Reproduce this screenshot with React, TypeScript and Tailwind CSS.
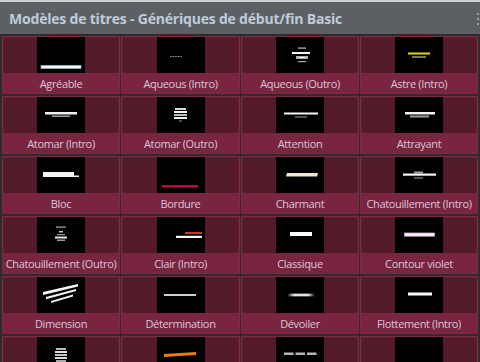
import type { ReactNode } from "react";

type Preset = { name: string; art: ReactNode };

const presets: Preset[] = [
  {
    name: "Agréable",
    art: <rect x="4" y="28.5" width="40" height="3" fill="#eef8fb" stroke="#9cc6d6" strokeWidth="0.6" />,
  },
  {
    name: "Aqueous (Intro)",
    art: <line x1="13" y1="19.5" x2="25" y2="19.5" stroke="#9a9a9a" strokeWidth="1" strokeDasharray="1 0.6" />,
  },
  {
    name: "Aqueous (Outro)",
    art: (
      <g>
        <rect x="22" y="10.5" width="8" height="1.2" fill="#bdbdbd" />
        <rect x="16" y="15" width="18" height="2" fill="#f4f4f4" />
        <rect x="20" y="19" width="12" height="3" fill="#b0b0b0" />
        <rect x="23" y="20" width="6" height="1" fill="#e8e8e8" />
        <rect x="22" y="24" width="8" height="1.2" fill="#a8a8a8" />
      </g>
    ),
  },
  {
    name: "Astre (Intro)",
    art: (
      <g>
        <rect x="13" y="15.5" width="22" height="2" fill="#e4d51a" />
        <rect x="17" y="19.5" width="14" height="1" fill="#e6e6e6" />
      </g>
    ),
  },
  {
    name: "Atomar (Intro)",
    art: (
      <g>
        <rect x="8" y="15" width="32" height="2.5" fill="#f2f2f2" />
        <rect x="15" y="18.5" width="18" height="1.5" fill="#9a9a9a" />
      </g>
    ),
  },
  {
    name: "Atomar (Outro)",
    art: (
      <g>
        <rect x="18" y="11" width="11" height="2" fill="#d8d8d8" />
        <rect x="17" y="14" width="13" height="2" fill="#f4f4f4" />
        <rect x="17" y="17" width="13" height="2" fill="#bdbdbd" />
        <rect x="17" y="20" width="13" height="2" fill="#f0f0f0" />
        <rect x="22" y="23.5" width="3" height="1" fill="#8a8a8a" />
      </g>
    ),
  },
  {
    name: "Attention",
    art: (
      <g>
        <rect x="8" y="15.5" width="34" height="2" fill="#f4f4f4" />
        <rect x="19" y="19.5" width="12" height="1" fill="#a8a8a8" />
      </g>
    ),
  },
  {
    name: "Attrayant",
    art: (
      <g>
        <rect x="10" y="15" width="30" height="2.5" fill="#f2f2f2" />
        <rect x="15" y="18.5" width="19" height="2" fill="#9c9c9c" />
      </g>
    ),
  },
  {
    name: "Bloc",
    art: (
      <g>
        <rect x="6" y="15" width="31" height="5" fill="#f4f4f4" />
        <rect x="37" y="18.5" width="5" height="1.5" fill="#f4f4f4" />
      </g>
    ),
  },
  {
    name: "Bordure",
    art: <rect x="5" y="28" width="36" height="2.6" fill="#a3124a" />,
  },
  {
    name: "Charmant",
    art: <polygon points="11,16 42,16 41,19.5 10,19.5" fill="#f1ead0" />,
  },
  {
    name: "Chatouillement (Intro)",
    art: (
      <g>
        <rect x="19" y="14.5" width="9" height="2" fill="#a0a0a0" />
        <rect x="8" y="16.5" width="33" height="2.2" fill="#f4f4f4" />
        <rect x="19" y="20.5" width="9" height="1" fill="#a8a8a8" />
      </g>
    ),
  },
  {
    name: "Chatouillement (Outro)",
    art: (
      <g>
        <rect x="19" y="9.5" width="10" height="1.2" fill="#a8a8a8" />
        <rect x="22" y="14" width="4" height="1.5" fill="#c8c8c8" />
        <rect x="20" y="17" width="8" height="1.2" fill="#9a9a9a" />
        <rect x="18" y="19.5" width="12" height="2" fill="#e4e4e4" />
        <rect x="20" y="22.5" width="8" height="1.5" fill="#9a9a9a" />
      </g>
    ),
  },
  {
    name: "Clair (Intro)",
    art: (
      <g>
        <rect x="28" y="15" width="17" height="2" fill="#c8381a" />
        <rect x="19" y="18.8" width="26" height="2.2" fill="#f6f6f6" />
      </g>
    ),
  },
  {
    name: "Classique",
    art: <rect x="14" y="15" width="22" height="4" fill="#fafafa" />,
  },
  {
    name: "Contour violet",
    art: <rect x="9.5" y="16" width="30" height="3.2" fill="#fbfbfb" stroke="#d29ac6" strokeWidth="0.8" />,
  },
  {
    name: "Dimension",
    art: (
      <g>
        <polygon points="6,15 41,7 41,9.5 6,18" fill="#f6f6f6" />
        <polygon points="9,20 39,12 39,14 9,22.2" fill="#f2f2f2" />
        <polygon points="14,24 36,17.5 36,19.5 14,26" fill="#eeeeee" />
      </g>
    ),
  },
  {
    name: "Détermination",
    art: <rect x="7" y="17" width="32" height="2" fill="#cfcfcf" />,
  },
  {
    name: "Dévoiler",
    art: (
      <g>
        <defs>
          <linearGradient id="glow" x1="0" x2="1" y1="0" y2="0">
            <stop offset="0" stopColor="#ffffff" stopOpacity="0" />
            <stop offset="0.25" stopColor="#ffffff" stopOpacity="1" />
            <stop offset="0.75" stopColor="#ffffff" stopOpacity="1" />
            <stop offset="1" stopColor="#ffffff" stopOpacity="0" />
          </linearGradient>
        </defs>
        <rect x="11" y="16.3" width="28" height="3.4" fill="url(#glow)" opacity="0.45" />
        <rect x="12" y="17.2" width="26" height="1.6" fill="url(#glow)" />
      </g>
    ),
  },
  {
    name: "Flottement (Intro)",
    art: <rect x="13" y="15.5" width="24" height="3" fill="#fafafa" />,
  },
  {
    name: "Flottement (Outro)",
    art: (
      <g>
        <rect x="19" y="11" width="10" height="2" fill="#b8b8b8" />
        <rect x="18" y="14" width="12" height="2" fill="#e0e0e0" />
        <rect x="18" y="17" width="12" height="2" fill="#c4c4c4" />
        <rect x="18" y="20" width="12" height="2" fill="#dcdcdc" />
        <rect x="19" y="23" width="10" height="2" fill="#a8a8a8" />
      </g>
    ),
  },
  {
    name: "Flux",
    art: <polygon points="7,17 39,15 39,18 7,20" fill="#f07c0c" />,
  },
  {
    name: "Fragments",
    art: (
      <g>
        <rect x="8" y="15.5" width="9.5" height="2.5" fill="#b4b4b4" />
        <rect x="19.5" y="15.5" width="9.5" height="2.5" fill="#b4b4b4" />
        <rect x="31" y="15.5" width="9.5" height="2.5" fill="#b4b4b4" />
      </g>
    ),
  },
  { name: "Glissement", art: null },
];

function Card({ preset }: { preset: Preset }) {
  return (
    <div className="flex h-[58px] flex-col border border-[#7e2a44] bg-[#7a2540]">
      <div className="flex h-[36px] justify-center border-x border-t border-[#622034] bg-[#531a2a]">
        <svg width="48" height="36" viewBox="0 0 48 36" className="-mt-px bg-black">
          {preset.art}
        </svg>
      </div>
      <div className="flex h-[20px] items-center justify-center whitespace-nowrap text-[11px] leading-none tracking-[-0.35px] text-[#d9c4dc]">
        {preset.name}
      </div>
    </div>
  );
}

export default function App() {
  return (
    <div
      className="relative h-[362px] w-[480px] overflow-hidden bg-[#2c2c2c]"
      style={{ fontFamily: '"Open Sans", "Noto Sans", sans-serif' }}
    >
      <div className="flex h-[35px] items-center border-t-2 border-b border-t-[#cfcfcf] border-b-[#2c2c2c] bg-[#5c6064] pl-[9px]">
        <span className="text-[14px] font-bold tracking-[-0.2px] text-[#bfcbdb]">
          Modèles de titres - Génériques de début/fin Basic
        </span>
      </div>
      <div className="absolute right-[1px] top-[13px] flex flex-col gap-[3px]">
        <span className="h-[2px] w-[2px] bg-[#9aa0a6]" />
        <span className="h-[2px] w-[2px] bg-[#9aa0a6]" />
        <span className="h-[2px] w-[2px] bg-[#9aa0a6]" />
      </div>
      <div className="grid grid-cols-[118px_119px_118px_118px] gap-x-px gap-y-[2px] pl-[2px] pt-px">
        {presets.map((p) => (
          <Card key={p.name} preset={p} />
        ))}
      </div>
    </div>
  );
}
